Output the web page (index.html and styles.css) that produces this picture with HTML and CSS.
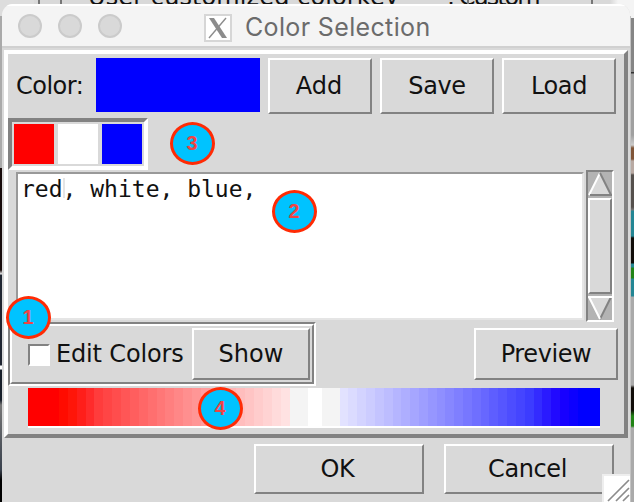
FILE: index.html
```html
<!DOCTYPE html>
<html lang="en">
<head>
<meta charset="utf-8">
<title>Color Selection</title>
<link rel="stylesheet" href="styles.css">
</head>
<body>
<div class="behind"><span class="behind-a">User customized colorkey</span><span class="behind-b">: Custom</span><i class="v v1"></i><i class="v v2"></i><i class="v v3"></i><i class="v v4"></i></div>
<main class="window">
  <header class="titlebar">
    <div class="lights"><i></i><i></i><i></i></div>
    <svg class="xicon" width="28" height="28" viewBox="0 0 28 28"><rect x="1" y="1" width="26" height="26" fill="#fff" stroke="#d6d6d6" stroke-width="2"/><path d="M5 4h5l13 20h-5z" fill="#8c8c8c"/><path d="M22 4L5 24" stroke="#8c8c8c" stroke-width="1.4"/></svg>
    <h1>Color Selection</h1>
  </header>
  <section class="panel">
    <div class="row toolbar">
      <span class="label t-color">Color:</span>
      <div class="current"></div>
      <button class="btn b-add"><span>Add</span></button>
      <button class="btn b-save"><span>Save</span></button>
      <button class="btn b-load"><span>Load</span></button>
    </div>
    <div class="swatches"><i class="red"></i><i class="white"></i><i class="blue"></i><b class="badge n3">3</b></div>
    <div class="row editor">
      <div class="text"><span>red</span><i class="caret"></i><span>, white, blue,</span><b class="badge n2">2</b></div>
      <div class="scroll">
        <svg width="24" height="24" viewBox="0 0 24 24"><path d="M12 1L23 23H1z" fill="#d9d9d9"/><path d="M12 1L1 23" stroke="#fff" stroke-width="2"/><path d="M12 1l11 22" stroke="#828282" stroke-width="2"/><path d="M2 23h22" stroke="#828282" stroke-width="2"/></svg>
        <div class="thumb"></div>
        <svg width="24" height="24" viewBox="0 0 24 24"><path d="M12 23L1 1h22z" fill="#d9d9d9"/><path d="M12 23l11-22" stroke="#828282" stroke-width="2"/><path d="M0 1h24M1 1l11 22" stroke="#fff" stroke-width="2"/></svg>
      </div>
    </div>
    <div class="row actions">
      <div class="groove"><div class="groove-in">
        <i class="check"></i><span class="label t-edit">Edit Colors</span>
        <button class="btn b-show"><span>Show</span></button>
      </div><b class="badge n1">1</b></div>
      <button class="btn b-preview"><span>Preview</span></button>
    </div>
    <div class="ramp-wrap"><div class="ramp"></div><b class="badge n4">4</b></div>
  </section>
  <footer class="row footer">
    <button class="btn b-ok"><span>OK</span></button>
    <button class="btn b-cancel"><span>Cancel</span></button>
  </footer>
  <svg class="grip" width="28" height="28" viewBox="0 0 28 28"><path d="M0 0h28v28H0z" fill="#eee"/><path d="M2 2h26v26H2z" fill="#fff"/><path d="M6 27L27 6M14 27L27 14M21 27l6-6" stroke="#8c8c8c" stroke-width="1.7"/></svg>
</main>
<script src="ramp.js"></script>
</body>
</html>
```
FILE: ramp.js
```js
// Stepped red - white - blue colour ramp
const ramp = document.querySelector('.ramp');
const add = (width, color) => {
  const bar = document.createElement('i');
  bar.style.width = width + 'px';
  bar.style.background = color;
  ramp.append(bar);
};
const steps = 27;
const level = k => Math.round(226 * Math.pow(k / steps, 0.88));
const low = k => Math.round(Math.max(0, level(k) - Math.max(0, 6 - k) * 8));
add(22, '#ff0000');
for (let k = 1; k <= steps; k++) {
  add(240 / steps, `rgb(255,${Math.max(low(k), level(k) - 12)},${low(k)})`);
}
add(18, '#f4f4f4');
add(14, '#ffffff');
add(18, '#f4f4f4');
for (let k = steps; k >= 1; k--) {
  add(238 / steps, `rgb(${level(k)},${low(k)},255)`);
}
add(22, '#0000ff');
```
FILE: styles.css
```css
* { box-sizing: border-box; }
body {
  margin: 0; width: 634px; height: 502px; overflow: hidden; position: relative;
  font: 24px/28px "DejaVu Sans", sans-serif; color: #111;
  padding: 4px 4px 0 2px;
  background:
    linear-gradient(#aaa 0 168px, #180b0b 168px 270px, #eee 274px, #202632 275px 365px, #fff 366px 369px, #18202b 370px 400px, #777 405px, #39414d 470px, #000 480px) 0 0 / 2px 502px no-repeat,
    linear-gradient(#f4f4f4 0 18px, #858585 18px 72px, #333 72px 73px, #a0a0a0 74px 135px, #ccc 145px, #805538 148px 159px, #b9aaa3 161px 173px, #55504d 175px 207px, #777 210px, #238694 211px 236px, #100c08 238px 263px, #238694 264px 267px, #218416 268px 278px, #238694 279px 296px, #aaa 297px 385px, #100c08 388px 410px, #218416 416px 426px, #aaa 428px) 631px 0 / 3px 502px no-repeat,
    #c4c4c4;
}
i, b { font-style: normal; }
.behind { position: absolute; left: 0; top: 0; width: 634px; height: 16px; overflow: hidden; background: linear-gradient(90deg, #ddd 0 34px, #d9d9d9 34px 610px, #f4f4f4 618px); }
.behind span { position: absolute; top: -15px; white-space: nowrap; line-height: 24px; }
.behind-a { left: 88px; letter-spacing: .1px; }
.behind-b { left: 447px; letter-spacing: -2px; }
.v { position: absolute; top: 0; width: 2px; height: 6px; background: #777; }
.v1 { left: 38px; } .v2 { left: 60px; } .v3 { left: 467px; } .v4 { left: 591px; }
.window { position: relative; width: 628px; height: 498px; background: #d9d9d9; border-radius: 11px 11px 0 0; overflow: hidden; }
.titlebar { height: 44px; background: #f4f4f4; border-top: 2px solid #fff; border-bottom: 2px solid #d0d0d0; display: flex; padding-left: 16px; }
.lights { display: flex; gap: 16px; padding-top: 8px; width: 186px; }
.lights i { width: 24px; height: 24px; border-radius: 50%; background: #d9d9d9; border: 2px solid #cbcbcb; }
.xicon { margin-top: 8px; }
h1 { margin: 7px 0 0 13px; font: 400 25px/28px Inter, sans-serif; color: #6b6b6b; white-space: nowrap; letter-spacing: .35px; }
.panel { margin: 2px 0 0 2px; width: 624px; height: 388px; border: 4px solid; border-color: #fff #828282 #828282 #fff; }
.row { display: flex; }
.label, .btn span { white-space: nowrap; }
.btn { padding: 0; font: inherit; color: inherit; background: #d9d9d9; border: 2px solid; border-color: #fff #828282 #828282 #fff; border-radius: 0; flex: none; display: flex; align-items: center; justify-content: center; }
.toolbar { padding: 4px 0 0 8px; height: 64px; }
.t-color { width: 80px; padding-top: 14px; letter-spacing: -.5px; }
.current { width: 164px; height: 54px; background: #00f; margin-right: 8px; }
.toolbar .btn { height: 56px; margin-right: 8px; letter-spacing: -.4px; }
.toolbar .b-add { width: 104px; letter-spacing: 0; padding-right: 2px; }
.b-save, .b-load { width: 114px; }
.swatches { position: relative; width: 140px; height: 52px; border: 4px solid; border-color: #828282 #fff #fff #828282; padding: 2px; display: flex; gap: 4px; }
.swatches i { width: 40px; height: 40px; }
.red { background: #f00; } .white { background: #fff; } .blue { background: #00f; }
.editor { height: 152px; padding-left: 8px; gap: 2px; }
.text { position: relative; margin-top: 2px; width: 568px; height: 148px; background: #fff; border: 2px solid; border-color: #999 #e5e5e5 #e5e5e5 #999; font: 23px/28px "DejaVu Sans Mono", monospace; white-space: pre; padding: 1px 0 0 3px; display: flex; }
.caret { width: 2px; height: 20px; margin: 3px -2px 0 0; background: #e5e5e5; }
.scroll { width: 28px; height: 152px; background: #b3b3b3; border: 2px solid; border-color: #828282 #fff #fff #828282; display: flex; flex-direction: column; gap: 2px; }
.thumb { height: 96px; background: #d9d9d9; border: 2px solid; border-color: #fff #828282 #828282 #fff; }
.actions { justify-content: space-between; padding-right: 6px; }
.groove { position: relative; width: 308px; height: 64px; border: 2px solid; border-color: #828282 #fff #fff #828282; }
.groove-in { height: 60px; border: 2px solid; border-color: #fff #828282 #828282 #fff; display: flex; }
.check { width: 22px; height: 22px; margin: 18px 6px 0 16px; background: #fff; border: 2px solid; border-color: #828282 #fff #fff #828282; }
.t-edit { width: 136px; padding-top: 14px; letter-spacing: -.15px; }
.b-show { width: 118px; height: 52px; margin-top: 2px; }
.b-preview { width: 144px; height: 52px; margin-top: 6px; letter-spacing: -.4px; }
.ramp-wrap { position: relative; margin: 2px 0 0 20px; width: 572px; }
.ramp { display: flex; height: 40px; border-bottom: 2px solid #fff; }
.ramp i { height: 38px; flex: none; }
.footer { padding: 6px 0 0 252px; gap: 20px; }
.footer .btn { width: 170px; height: 50px; letter-spacing: -.4px; padding-right: 3px; }
.grip { position: absolute; left: 600px; top: 470px; }
.badge { position: absolute; width: 45px; height: 43px; border: 3px solid #ff2b05; border-radius: 50%; background: #00c3ff; color: #f04444; font: bold 20px/37px "Liberation Sans", sans-serif; text-align: center; padding-right: 1px; z-index: 2; }
.n1 { left: -4px; top: -28px; } .n2 { left: 254px; top: 16px; }
.n3 { left: 158px; top: 0; } .n4 { left: 170px; top: -1px; }
```
